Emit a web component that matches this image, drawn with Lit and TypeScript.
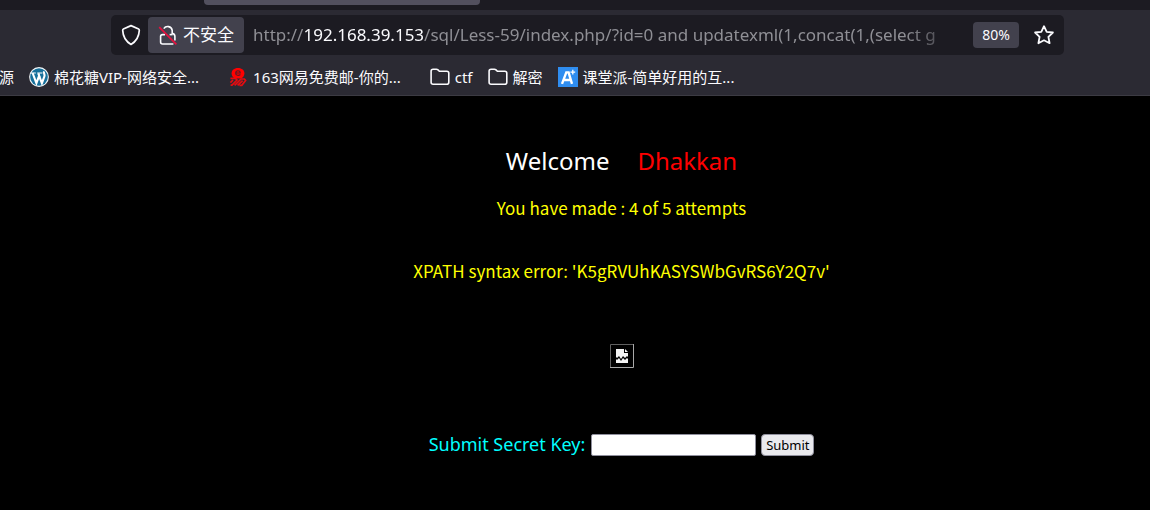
import { LitElement, html, css, svg } from "lit";
import { customElement, property } from "lit/decorators.js";

const shield = html`<svg width="22" height="22" viewBox="0 0 22 22" fill="none" stroke="#fbfbfe" stroke-width="1.7" stroke-linejoin="round" aria-hidden="true">
  <path d="M11 1.6 L18.6 5 Q19.4 5.4 19.3 6.4 C19 12.6 16.6 17.2 11 20.4 C5.4 17.2 3 12.6 2.7 6.4 Q2.6 5.4 3.4 5 Z" />
</svg>`;

const brokenLock = html`<svg width="20" height="22" viewBox="0 0 20 22" fill="none" aria-hidden="true">
  <path d="M5.8 4.6 A4.6 4.6 0 0 1 14.2 6.4 V9.4 Q16.9 10 16.9 12.4 V16.4" stroke="#fbfbfe" stroke-width="1.6" />
  <path d="M7 10.6 H4.6 Q2.6 10.6 2.6 12.6 V18 Q2.6 20 4.6 20 H15.4" stroke="#fbfbfe" stroke-width="1.6" />
  <path d="M11.6 10.6 H14.6" stroke="#fbfbfe" stroke-width="1.6" />
  <path d="M1.2 3.2 L18.4 20.4" stroke="#e8113f" stroke-width="1.7" />
</svg>`;

const star = html`<svg width="22" height="22" viewBox="0 0 22 22" fill="none" stroke="#fbfbfe" stroke-width="1.8" stroke-linejoin="round" aria-hidden="true">
  <path d="M11 2.2 L13.7 7.8 L19.9 8.5 L15.4 12.9 L16.6 19.2 L11 16.3 L5.4 19.2 L6.6 12.9 L2.1 8.5 L8.3 7.8 Z" />
</svg>`;

const icons: Record<string, unknown> = {
  wordpress: svg`<circle cx="10" cy="10" r="9.9" fill="#f4f8fa" /><circle cx="10" cy="10" r="8.8" fill="#16709b" />
    <path d="M1.8 6 H6.8 M8.2 6 H13.4" stroke="#fff" stroke-width="1.2" />
    <path d="M3.6 6 L7.4 16.2 L10.1 8.8 L12.9 16.2 L15.4 9.4 C16.2 7.4 14.4 6.4 15 4.4" fill="none" stroke="#fff" stroke-width="2.1" />
    <path d="M9.2 6.4 L10.6 10" stroke="#fff" stroke-width="2" />`,
  netease: svg`<path d="M10 1 C14 1 16.4 3.4 16.4 6.4 C16.4 8.6 15 10.4 13.4 11.4 H6.6 C5 10.4 3.6 8.6 3.6 6.4 C3.6 3.4 6 1 10 1 Z" fill="#f00" />
    <path d="M7.8 6 H12.2 C12.2 3 7.8 3 7.7 6.2 C7.6 8.6 10.8 8.8 12.4 7.6" fill="none" stroke="#5c1a24" stroke-width="1.2" />
    <path d="M2.4 11.4 H7.4 L9 13 L4 18.2 H2.6 M2.4 15.6 L5 13 M6.6 18.4 L13 12 H16.4 L17.6 13.6 L13.8 18.4 H11.4 M9.6 18.4 L14.6 13.6" fill="none" stroke="#e50b10" stroke-width="1.7" />`,
  folder: svg`<path d="M1.1 4.2 Q1.1 2.2 3.1 2.2 H6.4 Q7.3 2.2 8 2.9 L9.4 4.3 H16.8 Q18.8 4.3 18.8 6.3 V15.2 Q18.8 17.2 16.8 17.2 H3.1 Q1.1 17.2 1.1 15.2 Z" fill="none" stroke="#fbfbfe" stroke-width="1.6" />`,
  ketang: svg`<rect width="20" height="20" fill="#2f8df0" />
    <path d="M4 16.8 L8.3 5.4 H10.6 L14 16.8 M5.6 13 H12.2" fill="none" stroke="#fff" stroke-width="2.4" />
    <path d="M14.8 2.8 V7.6 M12.4 5.2 H17.2" stroke="#fff" stroke-width="1.3" />`,
};

@customElement("bookmark-link")
export class BookmarkLink extends LitElement {
  @property() icon = "";
  @property() label = "";

  static styles = css`
    :host { display: block; flex: none; }
    .link { display: flex; align-items: center; gap: 5px; color: #fbfbfe; text-decoration: none; }
    .icon { flex: none; }
  `;

  render() {
    return html`<a class="link" href="#">
      ${this.icon
        ? html`<svg class="icon" width="20" height="20" viewBox="0 0 20 20" aria-hidden="true">${icons[this.icon]}</svg>`
        : null}<span>${this.label}</span></a>`;
  }
}

@customElement("browser-chrome")
export class BrowserChrome extends LitElement {
  static styles = css`
    :host { display: block; background: #2b2a33; border-bottom: 1px solid #3c3b43; color: #fbfbfe;
      font-family: "Noto Sans", "Noto Sans CJK SC", sans-serif; }
    .tabs { height: 10px; background: #1c1b22; padding-left: 204px; }
    .tab { width: 276px; height: 5px; border-radius: 0 0 4px 4px; background: #52505e; }
    .bar { display: flex; align-items: center; height: 40px; margin: 5px 86px 0 111px; padding: 0 9px;
      box-sizing: border-box; background: #1c1b22; border-radius: 5px; }
    button { display: flex; align-items: center; flex: none; margin: 0; padding: 0; border: 0;
      background: none; color: inherit; font-family: inherit; }
    .security { height: 36px; margin: 0 9px 0 6px; padding: 0 10px; gap: 5px; border-radius: 4px;
      background: #42414d; font-size: 17px; line-height: 26px; }
    .url { flex: 1; min-width: 0; overflow: hidden; white-space: nowrap; color: #8f8f95;
      font-size: 17px; line-height: 28px;
      mask-image: linear-gradient(to left, transparent, #000 60px); }
    .host { color: #fbfbfe; }
    .zoom { height: 26px; margin: 0 14px 0 8px; padding: 0 9px; border-radius: 4px; background: #42414d;
      font-size: 14px; line-height: 20px; }
    .bookmarks { display: flex; align-items: center; height: 40px; padding-top: 3px; box-sizing: border-box;
      overflow: hidden; font-size: 15px; line-height: 24px; }
    .cut { margin-left: -1px; }
    .near { margin-left: 15px; }
    .far { margin-left: 29px; }
  `;

  render() {
    return html`
      <div class="tabs"><div class="tab"></div></div>
      <div class="bar">
        <button aria-label="Tracking protection">${shield}</button>
        <button class="security">${brokenLock}<span>不安全</span></button>
        <div class="url">http://<span class="host">192.168.39.153</span>/sql/Less-59/index.php/?id=0 and updatexml(1,concat(1,(select g</div>
        <button class="zoom">80%</button>
        <button aria-label="Bookmark this page">${star}</button>
      </div>
      <nav class="bookmarks">
        <bookmark-link class="cut" label="源"></bookmark-link>
        <bookmark-link class="near" icon="wordpress" label="棉花糖VIP-网络安全..."></bookmark-link>
        <bookmark-link class="far" icon="netease" label="163网易免费邮-你的..."></bookmark-link>
        <bookmark-link class="far" icon="folder" label="ctf"></bookmark-link>
        <bookmark-link class="near" icon="folder" label="解密"></bookmark-link>
        <bookmark-link class="near" icon="ketang" label="课堂派-简单好用的互..."></bookmark-link>
      </nav>`;
  }
}

@customElement("app-root")
export class AppRoot extends LitElement {
  static styles = css`
    :host { display: flex; flex-direction: column; min-height: 100vh; background: #000;
      font-family: "Noto Sans", "Noto Sans CJK SC", sans-serif; }
    .page { display: flex; flex-direction: column; align-items: center; padding: 48px 0 48px 93px; }
    .title { display: flex; gap: 28px; margin: 0; font-size: 24px; line-height: 34px; font-weight: 400; color: #fff; }
    .name { color: #f00; }
    .note { margin: 0; font-family: "Noto Sans CJK SC", sans-serif; font-size: 17px; line-height: 24px; color: #ff0; }
    .attempts { margin-top: 18px; }
    .error { margin-top: 39px; }
    .image { display: block; margin-top: 61px; }
    .form { display: flex; align-items: center; margin-top: 63px; }
    .label { margin-right: 6px; padding-bottom: 2px; font-size: 18px; line-height: 26px; color: #0ff; }
    .key { box-sizing: border-box; width: 165px; height: 22px; margin: 0 5px 0 0; padding: 1px 4px;
      border: 1px solid #8f8f9d; border-radius: 2px; background: #fff; font-size: 13px; }
    .submit { box-sizing: border-box; width: 53px; height: 22px; margin: 0; padding: 0;
      border: 1px solid #8f8f9d; border-radius: 4px; background: #e9e9ed; color: #000;
      font-family: inherit; font-size: 13px; line-height: 18px; }
  `;

  render() {
    return html`
      <browser-chrome></browser-chrome>
      <main class="page">
        <h1 class="title"><span>Welcome</span><span class="name">Dhakkan</span></h1>
        <p class="note attempts">You have made : 4 of 5 attempts</p>
        <p class="note error">XPATH syntax error: 'K5gRVUhKASYSWbGvRS6Y2Q7v'</p>
        <svg class="image" width="24" height="24" viewBox="0 0 24 24" role="img" aria-label="Missing image">
          <path d="M0.5 24 V0.5 H24" fill="none" stroke="#606060" />
          <path d="M0 23.5 H23.5 V0" fill="none" stroke="#a8a8a8" />
          <path d="M6 5 H14 V9 H18 V13 L17 12 L15 14 L13 12 L11 15 L9 12 L7 14 L6 13 Z" fill="#f4f4f4" />
          <path d="M15 5 L18 8 H15 Z" fill="#f4f4f4" />
          <path d="M6 15 L7 16 L9 14 L11 17 L13 14 L15 16 L17 14 L18 15 V19 H6 Z" fill="#f4f4f4" />
        </svg>
        <form class="form" @submit=${(e: Event) => e.preventDefault()}>
          <label class="label" for="key">Submit Secret Key:</label>
          <input class="key" id="key" type="text" />
          <button class="submit" type="submit">Submit</button>
        </form>
      </main>`;
  }
}
